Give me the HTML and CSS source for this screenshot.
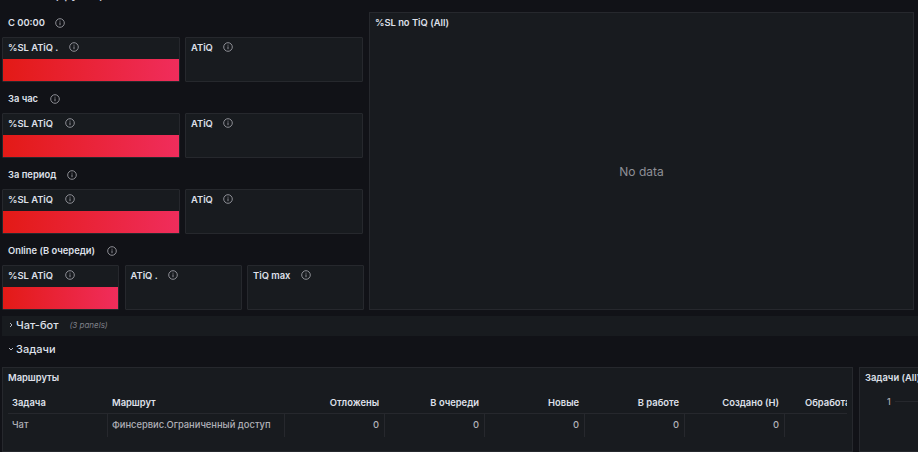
FILE: index.html
```html
<!DOCTYPE html>
<html lang="ru">
<head>
<meta charset="utf-8">
<title>Dashboard</title>
<link rel="stylesheet" href="styles.css">
</head>
<body>
<svg class="defs" width="0" height="0" aria-hidden="true">
  <symbol id="info" viewBox="0 0 10 10">
    <circle cx="5" cy="5" r="4.3" fill="none" stroke="currentColor" stroke-width="0.9"/>
    <rect x="4.55" y="4.4" width="0.9" height="2.8" fill="currentColor"/>
    <rect x="4.55" y="2.7" width="0.9" height="0.9" fill="currentColor"/>
  </symbol>
  <symbol id="chev" viewBox="0 0 6 6">
    <path d="M2 1 L4 3 L2 5" fill="none" stroke="currentColor" stroke-width="0.9"/>
  </symbol>
</svg>
<div class="clip"><div class="clip-text">Чат (группа)</div></div>
<div class="main">
  <div class="left">
    <div class="label">С 00:00 <svg class="i"><use href="#info"/></svg></div>
    <div class="cards">
      <div class="card"><div class="title">%SL ATiQ . <svg class="i"><use href="#info"/></svg></div><div class="red"></div></div>
      <div class="card"><div class="title">ATiQ <svg class="i"><use href="#info"/></svg></div></div>
    </div>
    <div class="label">За час <svg class="i wide"><use href="#info"/></svg></div>
    <div class="cards">
      <div class="card"><div class="title">%SL ATiQ <svg class="i wide"><use href="#info"/></svg></div><div class="red"></div></div>
      <div class="card"><div class="title">ATiQ <svg class="i"><use href="#info"/></svg></div></div>
    </div>
    <div class="label">За период <svg class="i"><use href="#info"/></svg></div>
    <div class="cards">
      <div class="card"><div class="title">%SL ATiQ <svg class="i wide"><use href="#info"/></svg></div><div class="red"></div></div>
      <div class="card"><div class="title">ATiQ <svg class="i"><use href="#info"/></svg></div></div>
    </div>
    <div class="label">Online (В очереди) <svg class="i wide"><use href="#info"/></svg></div>
    <div class="cards three">
      <div class="card"><div class="title">%SL ATiQ <svg class="i wide"><use href="#info"/></svg></div><div class="red"></div></div>
      <div class="card"><div class="title">ATiQ . <svg class="i"><use href="#info"/></svg></div></div>
      <div class="card"><div class="title">TiQ max <svg class="i"><use href="#info"/></svg></div></div>
    </div>
  </div>
  <div class="big">
    <div class="big-title">%SL no TiQ (All)</div>
    <div class="nodata">No data</div>
  </div>
</div>
<div class="row row-closed"><svg class="chev"><use href="#chev"/></svg><span class="row-name">Чат-бот</span><em class="row-count">(3 panels)</em></div>
<div class="row row-open"><svg class="chev down"><use href="#chev"/></svg><span class="row-name">Задачи</span></div>
<div class="bottom">
  <div class="routes">
    <div class="panel-name">Маршруты</div>
    <div class="table">
      <div class="tr head">
        <div class="c c1">Задача</div><div class="c c2">Маршрут</div><div class="c n">Отложены</div><div class="c n">В очереди</div><div class="c n">Новые</div><div class="c n">В работе</div><div class="c n">Создано (Н)</div><div class="c n cut">Обработано</div>
      </div>
      <div class="tr body">
        <div class="c c1">Чат</div><div class="c c2">Финсервис.Ограниченный доступ</div><div class="c n">0</div><div class="c n">0</div><div class="c n">0</div><div class="c n">0</div><div class="c n">0</div><div class="c n"></div>
      </div>
    </div>
  </div>
  <div class="tasks">
    <div class="panel-name">Задачи (All)</div>
    <div class="axis"><span>1</span><i></i></div>
  </div>
</div>
</body>
</html>
```
FILE: styles.css
```css
* { box-sizing: border-box; }
html, body { margin: 0; height: 452px; overflow: hidden; }
body { background: #111217; color: #ccccdc; font-family: Inter, "Liberation Sans", sans-serif; font-size: 9.375px; font-weight: 500; width: 918px; }
.defs { position: absolute; }
.clip { height: 4px; overflow: hidden; padding-left: 30px; }
.clip-text { margin-top: -12px; font-size: 12px; line-height: 14px; }
.main { display: flex; gap: 5px; height: 306px; padding: 8px 4px 0 2px; }
.left { width: 362px; display: flex; flex-direction: column; }
.label { height: 25px; padding: 0 6px 3px; line-height: 12px; display: flex; align-items: center; color: #dfe0ea; font-weight: 600; white-space: pre; }
.i { width: 10px; height: 10px; color: #9a9ba2; margin-left: 8px; flex: none; }
.i.wide { margin-left: 10px; }
.cards { display: grid; grid-template-columns: 178px 178px; gap: 5px; height: 45px; margin-bottom: 6px; }
.cards.three { grid-template-columns: 117px 117px 117px; gap: 5.5px; margin-bottom: 0; }
.card { background: #181b1f; border: 1px solid #26282d; display: flex; flex-direction: column; border-radius: 1px; }
.title { height: 21px; padding: 0 5px 3px; display: flex; align-items: center; color: #dfe0ea; font-weight: 600; white-space: pre; }
.red { flex: 1; background: linear-gradient(90deg, #e31a16, #f02d5c); }
.big { flex: 1; background: #181b1f; border: 1px solid #26282d; display: flex; flex-direction: column; }
.big-title { padding: 4px 5px; line-height: 12px; color: #dfe0ea; font-weight: 600; }
.nodata { flex: 1; display: flex; align-items: center; justify-content: center; font-size: 12px; font-weight: 400; color: #8e8f96; }
.row { display: flex; align-items: center; }
.row-closed { margin: 6px 0 0 2px; height: 20px; background: #181b1f; padding: 0 0 2px 6px; }
.row-open { height: 31px; padding: 0 0 5px 8px; }
.chev { width: 6px; height: 6px; margin-right: 2px; color: #c6c7d0; flex: none; }
.chev.down { transform: rotate(90deg); }
.row-name { font-size: 11px; font-weight: 500; color: #dfe0ea; }
.row-count { margin-left: 11px; font-size: 8px; font-weight: 400; color: #7e7f87; }
.bottom { display: flex; gap: 6px; padding-left: 2px; height: 85px; overflow: hidden; }
.routes { width: 851px; background: #181b1f; border: 1px solid #26282d; padding: 0 5px; flex: none; }
.tasks { width: 90px; flex: none; background: #181b1f; border: 1px solid #26282d; padding: 0 5px; white-space: nowrap; }
.panel-name { line-height: 12px; padding-top: 4px; color: #dfe0ea; font-weight: 600; }
.table { margin-top: 7px; width: 839px; overflow: hidden; }
.tr { display: grid; grid-template-columns: 100px 177px 100px 100px 100px 100px 100px 62px; }
.head { height: 23px; padding-top: 1px; align-items: center; border-bottom: 1px solid #26282d; color: #dfe0ea; font-weight: 600; }
.body { height: 23px; color: #b0b1b8; }
.c { padding: 0 4px; line-height: 22px; white-space: nowrap; overflow: hidden; }
.body .c { border-right: 1px solid #26282d; }
.body .c:last-child { border-right: 0; }
.n { text-align: right; padding-right: 5px; }
.head .n { padding-right: 6px; }
.head .cut { text-align: left; padding-left: 20px; padding-right: 0; }
.axis { display: flex; align-items: center; margin-top: 12px; padding-left: 22px; color: #a9aab1; font-size: 9px; }
.axis i { display: block; width: 40px; height: 1px; background: #26282d; margin-left: 4px; }
```
